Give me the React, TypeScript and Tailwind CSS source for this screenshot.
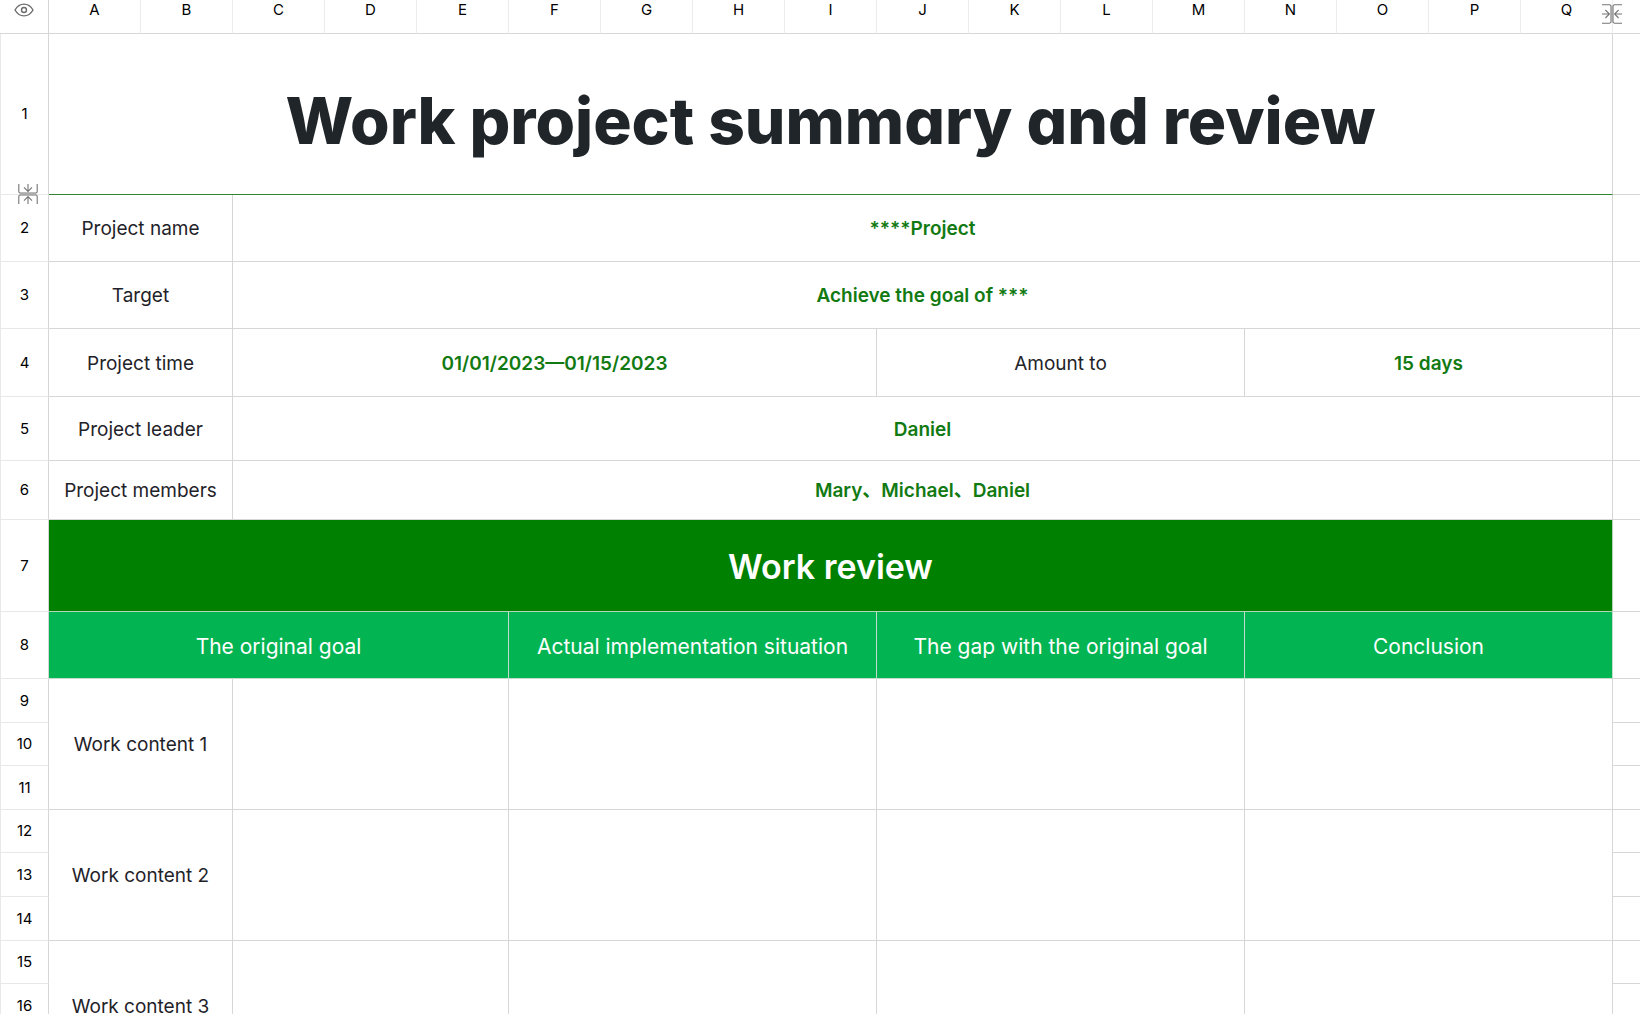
import type { ReactNode } from "react";
import { clsx } from "clsx";

type Tone = "label" | "value" | "title" | "banner" | "head" | "empty";

interface Cell {
    text?: string;
    span: number;
    rows?: number;
    tone: Tone;
}

interface Row {
    height: string;
    cells: Cell[];
}

const COLUMNS = "ABCDEFGHIJKLMNOPQ".split("");

const TONES: Record<Tone, string> = {
    label: "text-[19px] leading-6 pt-0.5 border-[#d6d6d6] text-[#1f2329]",
    value: "text-[19px] leading-6 pt-0.5 border-[#d6d6d6] font-semibold text-[#127a12]",
    title: "text-[64px] leading-[80px] pt-3.5 border-r-[#d6d6d6] border-b-[#2f842f] font-extrabold text-[#1f2529] [font-feature-settings:'cv11']",
    banner: "text-[34px] leading-10 pt-0.5 border-[#b5d6b5] bg-[#008000] font-semibold text-white",
    head: "text-[21px] leading-6 pt-1 border-[#c4dccb] bg-[#03b453] text-white",
    empty: "border-[#d6d6d6]",
};

const contentCells = (text: string): Cell[] => [
    { text, span: 2, rows: 3, tone: "label" },
    { span: 3, rows: 3, tone: "empty" },
    { span: 4, rows: 3, tone: "empty" },
    { span: 4, rows: 3, tone: "empty" },
    { span: 4, rows: 3, tone: "empty" },
];

const ROWS: Row[] = [
    { height: "h-[161px]", cells: [{ text: "Work project summary and review", span: 17, tone: "title" }] },
    {
        height: "h-[67px]",
        cells: [
            { text: "Project name", span: 2, tone: "label" },
            { text: "****Project", span: 15, tone: "value" },
        ],
    },
    {
        height: "h-[67px]",
        cells: [
            { text: "Target", span: 2, tone: "label" },
            { text: "Achieve the goal of ***", span: 15, tone: "value" },
        ],
    },
    {
        height: "h-[68px]",
        cells: [
            { text: "Project time", span: 2, tone: "label" },
            { text: "01/01/2023—01/15/2023", span: 7, tone: "value" },
            { text: "Amount to", span: 4, tone: "label" },
            { text: "15 days", span: 4, tone: "value" },
        ],
    },
    {
        height: "h-[64px]",
        cells: [
            { text: "Project leader", span: 2, tone: "label" },
            { text: "Daniel", span: 15, tone: "value" },
        ],
    },
    {
        height: "h-[59px]",
        cells: [
            { text: "Project members", span: 2, tone: "label" },
            { text: "Mary、Michael、Daniel", span: 15, tone: "value" },
        ],
    },
    { height: "h-[92px]", cells: [{ text: "Work review", span: 17, tone: "banner" }] },
    {
        height: "h-[67px]",
        cells: [
            { text: "The original goal", span: 5, tone: "head" },
            { text: "Actual implementation situation", span: 4, tone: "head" },
            { text: "The gap with the original goal", span: 4, tone: "head" },
            { text: "Conclusion", span: 4, tone: "head" },
        ],
    },
    { height: "h-[44px]", cells: contentCells("Work content 1") },
    { height: "h-[43px]", cells: [] },
    { height: "h-[44px]", cells: [] },
    { height: "h-[43px]", cells: contentCells("Work content 2") },
    { height: "h-[44px]", cells: [] },
    { height: "h-[44px]", cells: [] },
    { height: "h-[43px]", cells: contentCells("Work content 3") },
    { height: "h-[44px]", cells: [] },
    { height: "h-[44px]", cells: [] },
];

function EyeIcon() {
    return (
        <svg width="20" height="14" viewBox="0 0 20 14" fill="none" stroke="#6b6b6b" strokeWidth="1.4" className="block">
            <path d="M1 7C3.2 3.2 6.3 1.1 10 1.1S16.8 3.2 19 7c-2.2 3.8-5.3 5.9-9 5.9S3.2 10.8 1 7Z" strokeLinejoin="round" />
            <circle cx="10" cy="7" r="2.5" />
        </svg>
    );
}

// Two brackets back to back with arrows pointing at the seam between them
function SeamIcon({ vertical }: { vertical?: boolean }) {
    return (
        <svg
            width="20"
            height="20"
            viewBox="0 0 20 20"
            fill="none"
            stroke="#757575"
            strokeWidth="1.1"
            className={clsx("block", vertical && "rotate-90")}
        >
            <path d="M10 1v18" stroke="#cfcfcf" />
            <path d="M0 .8h7.4q1.6 0 1.6 1.6v15.2q0 1.6-1.6 1.6H0" />
            <path d="M20 .8h-7.4q-1.6 0-1.6 1.6v15.2q0 1.6 1.6 1.6H20" />
            <path d="M0 10h7.4M3.4 6 7.4 10l-4 4" />
            <path d="M20 10h-7.4M16.6 6l-4 4 4 4" />
        </svg>
    );
}

function IconButton({ label, className, children }: { label: string; className?: string; children: ReactNode }) {
    return (
        <button type="button" aria-label={label} className={className}>
            {children}
        </button>
    );
}

export default function App() {
    return (
        <div className="h-screen overflow-hidden bg-white font-['Inter','Noto_Sans_CJK_SC',sans-serif]">
            <table className="w-full table-fixed border-separate border-spacing-0">
                <colgroup>
                    <col className="w-[49px]" />
                    {COLUMNS.map((name) => (
                        <col key={name} />
                    ))}
                    <col className="w-[27px]" />
                </colgroup>
                <thead>
                    <tr className="h-[34px]">
                        <td className="border-r border-b border-[#d6d6d6] p-0 align-top">
                            <IconButton label="Toggle visibility" className="mx-auto mt-[3px] block">
                                <EyeIcon />
                            </IconButton>
                        </td>
                        {COLUMNS.map((name, i) => (
                            <th
                                key={name}
                                scope="col"
                                className="relative border-r border-b border-r-[#ececec] border-b-[#d6d6d6] p-0 align-top text-[15px] leading-5 font-normal text-black"
                            >
                                {name}
                                {i === COLUMNS.length - 1 && (
                                    <IconButton label="Expand columns" className="absolute top-1 -right-2.5 z-10">
                                        <SeamIcon />
                                    </IconButton>
                                )}
                            </th>
                        ))}
                        <td className="border-b border-[#d6d6d6] p-0" />
                    </tr>
                </thead>
                <tbody>
                    {ROWS.map((row, i) => (
                        <tr key={i} className={row.height}>
                            <th
                                scope="row"
                                className="relative border-r border-b border-l border-r-[#d6d6d6] border-b-[#e8e8e8] border-l-[#e8e8e8] p-0 text-[15px] leading-5 font-normal text-black"
                            >
                                {i + 1}
                                {i === 0 && (
                                    <IconButton label="Expand rows" className="absolute -bottom-2.5 left-[17px] z-10">
                                        <SeamIcon vertical />
                                    </IconButton>
                                )}
                            </th>
                            {row.cells.map((cell, j) => (
                                <td
                                    key={j}
                                    colSpan={cell.span}
                                    rowSpan={cell.rows}
                                    className={clsx("border-r border-b px-0 pb-0 text-center whitespace-nowrap", TONES[cell.tone])}
                                >
                                    {cell.text}
                                </td>
                            ))}
                            <td className="border-b border-[#d6d6d6] p-0" />
                        </tr>
                    ))}
                </tbody>
            </table>
        </div>
    );
}
